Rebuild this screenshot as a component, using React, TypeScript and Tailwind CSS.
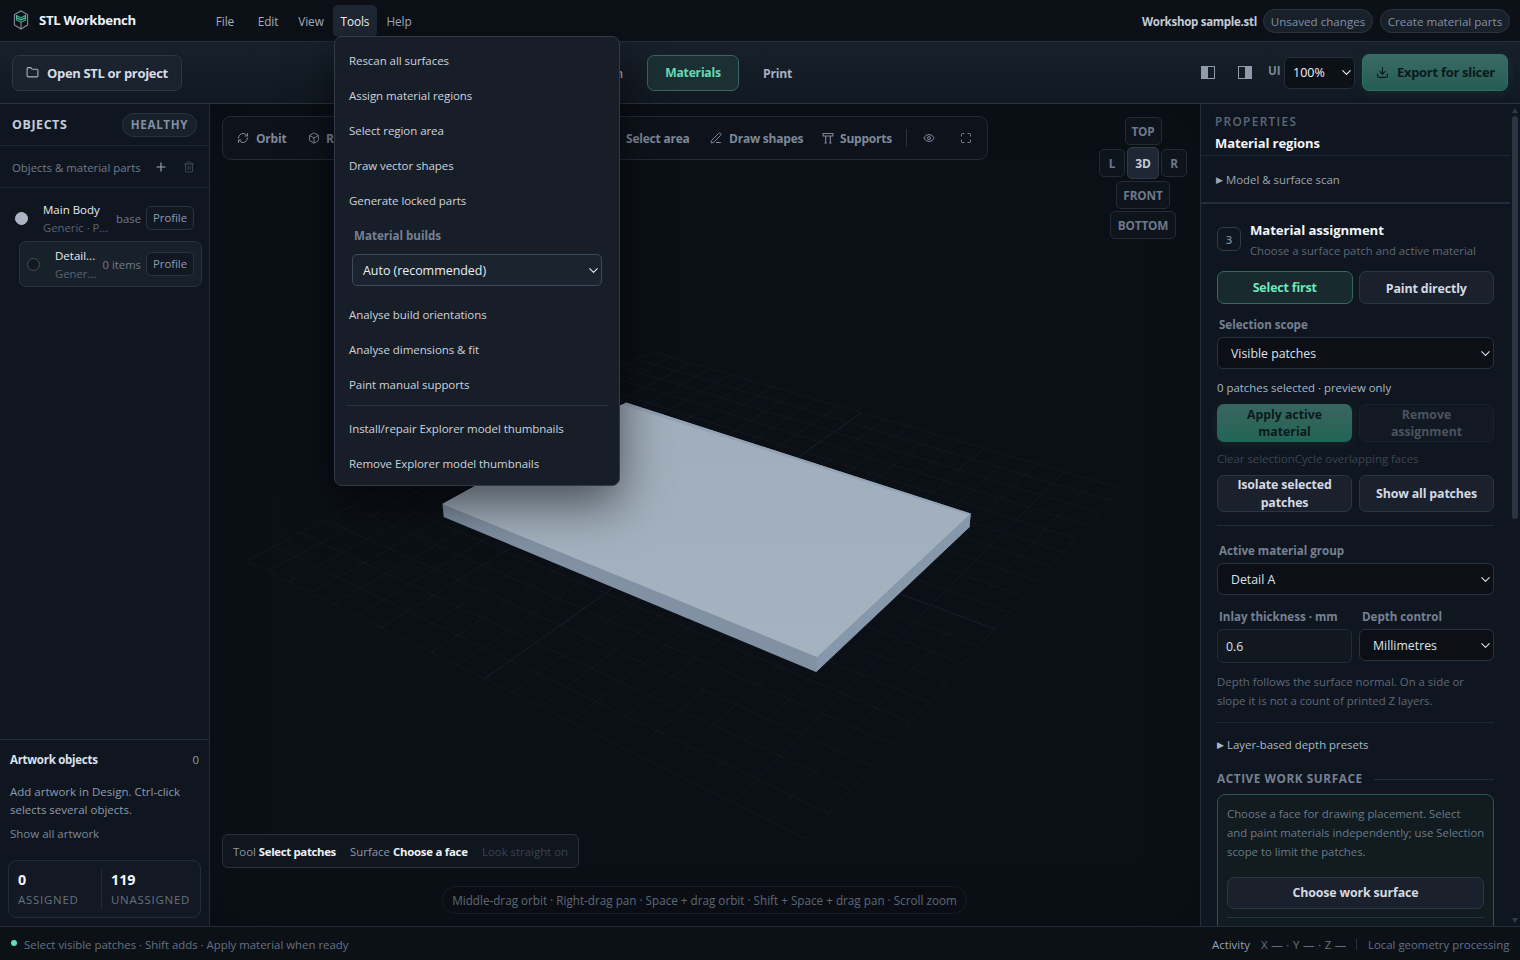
import React from 'react';
import { Box, ChevronDown, Download, Eye, Folder, Maximize, PenLine, Plus, RefreshCw, Trash2 } from 'lucide-react';
import clsx from 'clsx';

const menus = [
  { label: 'File', width: 'w-[42px]' },
  { label: 'Edit', width: 'w-[42px]' },
  { label: 'View', width: 'w-[42px]' },
  { label: 'Tools', width: 'w-[44px]' },
  { label: 'Help', width: 'w-[42px]' },
];

const Logo = () => (
  <svg width="16" height="20" viewBox="0 0 16 20" fill="none" strokeWidth="1.1">
    <path d="M8 1 L14.6 4.6 V15 L8 19 L1.4 15 V4.6 Z M8 12 V19" stroke="#7f8b9b" />
    <path d="M3.4 5.4 L8 7.8 L12.6 5.4 V9.8 L8 12.2 L3.4 9.8 Z" stroke="#45a586" />
    <path d="M3.6 5.6 V7.8 L8 9.8 L12.4 7.8 V5.6" stroke="#56c7a2" />
  </svg>
);

const SupportsIcon = () => (
  <svg width="12" height="12" viewBox="0 0 12 12" fill="none" stroke="currentColor" strokeWidth="1.1">
    <path d="M.5 1.5 H11.5 M.5 4 H11.5 M1 1.5 V4 M11 1.5 V4 M3.7 4 V11 M8.3 4 V11 M2.4 11 H4.8 M7.2 11 H9.6" />
  </svg>
);

const PanelIcon = ({ side }: { side: 'left' | 'right' }) => (
  <svg width="14" height="13" viewBox="0 0 14 13">
    <rect x="0.5" y="0.5" width="13" height="12" fill="none" stroke="#8f9bab" />
    <rect x={side === 'left' ? 1 : 7} y="0.5" width="6" height="12" fill="#8f9bab" />
  </svg>
);

const Header = () => (
  <header className="flex h-[42px] shrink-0 items-center border-b border-[#232c38] bg-[#0c1118]">
    <div className="flex w-[204px] items-center pl-[13px]">
      <Logo />
      <span className="ml-[10px] pt-px text-[13.2px] font-bold tracking-[-0.33px] text-[#eef2f7]">STL Workbench</span>
    </div>
    <nav className="flex gap-px">
      {menus.map((m) => (
        <button
          key={m.label}
          className={clsx(
            'h-8 rounded-[5px] pt-0.5 text-center text-[11.8px] tracking-[-0.1px]',
            m.width,
            m.label === 'Tools' ? 'bg-[#1e2733] text-[#f3f6fa]' : 'text-[#a4aebc]',
          )}
        >
          {m.label}
        </button>
      ))}
    </nav>
    <div className="ml-auto flex items-center pr-[10px]">
      <span className="mr-[7px] w-[114px] whitespace-nowrap pt-0.5 text-right text-[11.5px] font-bold tracking-[-0.28px] text-[#c3cbd6]">Workshop sample.stl</span>
      <span className="mr-[7px] h-6 w-[110px] whitespace-nowrap rounded-full border border-[#2a3441] bg-[#18202a] pt-[3px] text-center text-[11.6px] text-[#8290a5]">Unsaved changes</span>
      <span className="h-6 w-[130px] whitespace-nowrap rounded-full border border-[#2a3441] bg-[#18202a] pt-[3px] text-center text-[11.6px] text-[#8290a5]">Create material parts</span>
    </div>
  </header>
);

const Toolbar = () => (
  <div className="flex h-[62px] shrink-0 items-center border-b border-[#2a3340] bg-gradient-to-b from-[#18202a] to-[#111821]">
    <button className="ml-3 flex h-9 w-[170px] items-center rounded-[7px] border border-[#2c3745] bg-[#1a222d] pl-[13px] text-[13px] font-bold tracking-[-0.33px] text-[#d5dce6]">
      <Folder size={13} strokeWidth={2} className="mr-2 text-[#a9b3c1]" />
      <span className="whitespace-nowrap pt-0.5">Open STL or project</span>
    </button>
    <div className="ml-[394px] flex w-[71px] justify-end pr-6">
      <span className="pt-0.5 text-[12px] font-semibold text-[#a4aebc]">Design</span>
    </div>
    <button className="h-9 w-[92px] rounded-[7px] border border-[#35665f] bg-[#1c2f33] pt-0.5 text-[12.2px] font-bold tracking-[-0.25px] text-[#62dcb5]">Materials</button>
    <span className="ml-6 pt-[3px] text-[12.2px] font-bold tracking-[-0.2px] text-[#a4b0c0]">Print</span>
    <div className="ml-auto flex items-center pr-3">
      <PanelIcon side="left" />
      <span className="w-[23px]" />
      <PanelIcon side="right" />
      <span className="mb-[3px] ml-4 w-4 text-[11.5px] font-bold text-[#7c8797]">UI</span>
      <span className="flex h-8 w-[71px] items-center rounded-md border border-[#242e3a] bg-[#0c1118] pl-2 text-[12.5px] font-medium text-[#eef2f7]">
        <span className="pt-0.5">100%</span>
        <ChevronDown size={15} strokeWidth={1.7} className="ml-auto" />
      </span>
      <button className="ml-[7px] flex h-[37px] w-[146px] items-center rounded-[7px] border border-[#2f7064] bg-gradient-to-b from-[#3a6b66] to-[#245c52] pl-[13px] text-[13px] font-bold tracking-[-0.3px] text-[#0c1a1c] shadow-[0_2px_12px_rgba(60,160,140,0.12)]">
        <Download size={13} className="mr-2" />
        <span className="whitespace-nowrap pt-px">Export for slicer</span>
      </button>
    </div>
  </div>
);

const ObjectRow = ({ name, sub, note, nested }: { name: string; sub: string; note: string; nested?: boolean }) => (
  <div
    className={clsx(
      'flex h-[46px] items-center rounded-[7px] border pr-[7px]',
      nested ? 'ml-[19px] mr-[7px] border-[#28323f] bg-[#18202a] pl-[7px]' : 'ml-[7px] mr-[7px] border-transparent pl-[7px]',
    )}
  >
    <span
      className={clsx('size-[13px] shrink-0 rounded-full border', nested ? 'border-[#454d58] bg-[#15191f]' : 'border-[#b1bbc9] bg-[#aab4c3]')}
    />
    <div className={clsx('shrink-0 pt-px leading-[18px]', nested ? 'ml-[15px] w-[42px]' : 'ml-[15px] w-[68px]')}>
      <div className="whitespace-nowrap text-[11.5px] text-[#e6ebf2]">{name}</div>
      <div className="whitespace-nowrap text-[11.3px] text-[#596475]">{sub}</div>
    </div>
    <span className="ml-auto whitespace-nowrap pt-0.5 text-[11.3px] text-[#6f7b8d]">{note}</span>
    <span className="ml-[5px] h-6 w-12 shrink-0 rounded-[5px] border border-[#2a3441] bg-[#121821] pt-[3px] text-center text-[11.3px] text-[#8c9bb3]">Profile</span>
  </div>
);

const ObjectsPanel = () => (
  <aside className="flex w-[210px] shrink-0 flex-col border-r border-[#232c38] bg-[#10161f]">
    <div className="flex h-[42px] shrink-0 items-center justify-between border-b border-[#1f2833] pl-3 pr-3">
      <span className="pt-0.5 text-[12.4px] font-bold tracking-[0.6px] text-[#c3cede]">OBJECTS</span>
      <span className="flex h-6 w-[75px] items-center justify-center rounded-full border border-[#2a3441] bg-[#18202a] pt-px text-[11.6px] font-bold tracking-[0.65px] text-[#8290a5]">HEALTHY</span>
    </div>
    <div className="flex h-[42px] shrink-0 items-center border-b border-[#1f2833] pl-3">
      <span className="w-[142px] whitespace-nowrap pt-0.5 text-[11.4px] text-[#6f7b8d]">Objects &amp; material parts</span>
      <Plus size={14} className="text-[#9aa5b4]" />
      <Trash2 size={12} className="ml-[15px] text-[#3b4553]" />
    </div>
    <div className="flex flex-col pt-[7px]">
      <ObjectRow name="Main Body" sub="Generic · P..." note="base" />
      <ObjectRow name="Detail..." sub="Gener..." note="0 items" nested />
    </div>
    <div className="mt-auto flex h-[187px] shrink-0 flex-col border-t border-[#232c38] px-[10px] pt-[11px] text-[11.5px] text-[#8e9bae]">
      <div className="flex justify-between leading-[18px]">
        <span className="font-bold tracking-[-0.28px] text-[#dbe2eb]">Artwork objects</span>
        <span>0</span>
      </div>
      <p className="mt-[14px] whitespace-nowrap leading-[18px]">Add artwork in Design. Ctrl-click<br />selects several objects.</p>
      <span className="mt-[6px] leading-[18px] text-[#7b8798]">Show all artwork</span>
      <div className="-mx-[2px] mt-[17px] flex h-[58px] items-center rounded-lg border border-[#232d39] bg-[#121922]">
        <div className="ml-[9px] w-[83px] pt-px">
          <div className="text-[14.3px] font-bold leading-[20px] text-[#f1f5f9]">0</div>
          <div className="text-[11.5px] leading-[19px] tracking-[0.72px] text-[#66727f]">ASSIGNED</div>
        </div>
        <span className="h-[38px] w-px bg-[#232d39]" />
        <div className="ml-[9px] pt-px">
          <div className="text-[14.3px] font-bold leading-[20px] text-[#f1f5f9]">119</div>
          <div className="text-[11.5px] leading-[19px] tracking-[0.72px] text-[#66727f]">UNASSIGNED</div>
        </div>
      </div>
    </div>
  </aside>
);

// Perspective map of the unit square onto the floor quad
const floor = { l: [246.5, 560.5], t: [651.7, 351.5], r: [1120.7, 488.3], b: [806, 839.3] };

const project = (u: number, v: number) => {
  const [x0, y0] = floor.l;
  const [x1, y1] = floor.t;
  const [x2, y2] = floor.r;
  const [x3, y3] = floor.b;
  const dx1 = x1 - x2, dx2 = x3 - x2, sx = x0 - x1 + x2 - x3;
  const dy1 = y1 - y2, dy2 = y3 - y2, sy = y0 - y1 + y2 - y3;
  const det = dx1 * dy2 - dx2 * dy1;
  const g = (sx * dy2 - dx2 * sy) / det;
  const h = (dx1 * sy - sx * dy1) / det;
  const w = g * u + h * v + 1;
  const x = ((x1 - x0 + g * x1) * u + (x3 - x0 + h * x3) * v + x0) / w;
  const y = ((y1 - y0 + g * y1) * u + (y3 - y0 + h * y3) * v + y0) / w;
  return `${x.toFixed(2)} ${y.toFixed(2)}`;
};

const Scene = () => {
  const steps = Array.from({ length: 21 }, (_, i) => i);
  return (
    <svg className="block" width="990" height="822" viewBox="210 104 990 822" fill="none">
      <defs>
        <linearGradient id="top" x1="0" y1="400" x2="0" y2="660" gradientUnits="userSpaceOnUse">
          <stop offset="0" stopColor="#a0aebb" />
          <stop offset="1" stopColor="#a5b3c1" />
        </linearGradient>
      </defs>
      {steps.map((i) => (
        <path
          key={i}
          d={`M${project(i / 20, 0)} L${project(i / 20, 1)} M${project(0, i / 20)} L${project(1, i / 20)}`}
          stroke={i === 10 ? '#1a2027' : '#12181e'}
        />
      ))}
      <path d="M442.5 504 L626 402.5 L970.7 513.5 L969.5 527 L816 672 L443.7 517 Z" fill="#8190a2" />
      <path d="M817 657 L970.7 513.5 L969.5 527 L816 672 Z" fill="#8798aa" />
      <path d="M442.5 504 L626 402.5 L970.7 513.5 L817 657 Z" fill="#93a2b5" />
      <path d="M442.5 504 L622 404.5 L969 515 L817 657 Z" fill="url(#top)" />
    </svg>
  );
};

const tool = 'flex items-center whitespace-nowrap text-[12px] font-bold tracking-[-0.22px] text-[#7d899a]';
const viewKey = 'flex h-7 items-center justify-center rounded-[5px] border border-[#222b36] bg-[#0e141c] pt-px text-[11.8px] font-bold tracking-[-0.15px] text-[#6d788a]';

const Viewport = () => (
  <main className="relative w-[990px] shrink-0 bg-[#0b1017] shadow-[inset_0_0_60px_rgba(0,0,0,0.2)]">
    <Scene />
    <div className="absolute left-3 top-3 flex h-[44px] w-[766px] items-center rounded-[9px] border border-[#222b36] bg-[#0e131b] pl-[14px]">
      <span className={clsx(tool, 'w-[71px]')}><RefreshCw size={12} className="mr-[7px]" /><span className="pt-0.5">Orbit</span></span>
      <span className={clsx(tool, 'w-[318px]')}><Box size={12} className="mr-[6px]" /><span className="pt-0.5">R</span></span>
      <span className={clsx(tool, 'w-[84px] pt-0.5')}>Select area</span>
      <span className={clsx(tool, 'w-[112px]')}><PenLine size={12} className="mr-[7px]" /><span className="pt-0.5">Draw shapes</span></span>
      <span className={clsx(tool, 'w-[84px]')}><SupportsIcon /><span className="ml-[6px] pt-0.5">Supports</span></span>
      <span className="h-[18px] w-px bg-[#2a3441]" />
      <Eye size={12} className="ml-4 text-[#7d899a]" />
      <Maximize size={12} className="ml-[25px] text-[#7d899a]" />
    </div>
    <div className="absolute right-[13px] top-[13px] flex w-[88px] flex-col items-center">
      <span className={clsx(viewKey, 'w-[37px]')}>TOP</span>
      <div className="mt-[2px] flex items-center gap-[2px]">
        <span className={clsx(viewKey, 'w-[26px]')}>L</span>
        <span className="flex h-8 w-8 items-center justify-center rounded-[5px] border border-[#303b49] bg-[#1e2733] pt-px text-[12px] font-bold text-[#c3ccd8]">3D</span>
        <span className={clsx(viewKey, 'w-[26px]')}>R</span>
      </div>
      <span className={clsx(viewKey, 'mt-[2px] w-[54px]')}>FRONT</span>
      <span className={clsx(viewKey, 'mt-[2px] w-[66px]')}>BOTTOM</span>
    </div>
    <div className="absolute left-3 top-[730px] flex h-[34px] w-[357px] items-center whitespace-nowrap rounded-md border border-[#28323f] bg-[#0f161e] pl-[10px] pt-px text-[11.4px] text-[#8d99a9]">
      <span className="w-[117px]">Tool <b className="font-bold tracking-[-0.33px] text-[#eef2f7]">Select patches</b></span>
      <span className="w-[132px]">Surface <b className="font-bold tracking-[-0.24px] text-[#eef2f7]">Choose a face</b></span>
      <span className="text-[#39434f]">Look straight on</span>
    </div>
    <div className="absolute left-[232px] top-[782px] flex h-7 w-[525px] items-center justify-center whitespace-nowrap rounded-full border border-[#171d25] bg-[#0a0e14] pt-px text-[11.7px] text-[#5d6877]">
      Middle-drag orbit · Right-drag pan · Space + drag orbit · Shift + Space + drag pan · Scroll zoom
    </div>
  </main>
);

const Select = ({ value, className }: { value: string; className?: string }) => (
  <div className={clsx('flex h-8 items-center rounded-md border border-[#28323f] bg-[#0c1016] pl-[13px] text-[12.3px] font-medium text-[#dde3eb]', className)}>
    <span className="pt-0.5">{value}</span>
    <ChevronDown size={15} strokeWidth={1.7} className="ml-auto" />
  </div>
);

const plainButton = 'flex items-center justify-center rounded-[7px] border border-[#2b3644] bg-[#1a212c] text-center text-[12.4px] font-bold leading-[18px] tracking-[-0.15px] text-[#d3dae4]';
const fieldLabel = 'whitespace-nowrap pl-[2px] text-[11.6px] font-bold leading-[18px] tracking-[-0.02px] text-[#758193]';

const PropertiesPanel = () => (
  <aside className="flex h-[822px] w-[320px] shrink-0 border-l border-[#232c38] bg-[#10161f]">
    <div className="h-[822px] w-[309px] overflow-hidden">
      <div className="h-[52px] border-b border-[#1f2833] pl-[14px] pt-[7px]">
        <div className="text-[11.8px] font-semibold leading-[20px] tracking-[1.35px] text-[#5d6878]">PROPERTIES</div>
        <div className="pt-px text-[13px] font-bold leading-[22px] tracking-[-0.1px] text-[#f1f5f9]">Material regions</div>
      </div>
      <div className="flex h-12 items-center border-b-2 border-[#232d39] pl-[15px] pt-0.5 text-[11.4px] text-[#9aa6b6]">
        <span className="mr-[3px] text-[9px]">▶</span>Model &amp; surface scan
      </div>
      <div className="pl-4 pr-4 pt-4">
        <div className="flex h-[41px]">
          <span className="mr-[9px] mt-[7px] flex size-6 items-center justify-center rounded-[6px] border border-[#2f3a48] pt-0.5 text-[11.3px] font-semibold text-[#7d899a]">3</span>
          <div className="whitespace-nowrap">
            <div className="text-[13.2px] font-bold leading-[21px] tracking-[-0.1px] text-[#f1f5f9]">Material assignment</div>
            <div className="text-[11.3px] leading-[20px] text-[#5d6878]">Choose a surface patch and active material</div>
          </div>
        </div>
        <div className="mt-[10px] grid grid-cols-2 gap-[6px]">
          <button className="h-[33px] rounded-[7px] border border-[#2f6a5d] bg-[#182a2e] pt-0.5 text-[12.4px] font-bold tracking-[-0.15px] text-[#6ee7bf]">Select first</button>
          <button className={clsx(plainButton, 'h-[33px] pt-0.5')}>Paint directly</button>
        </div>
        <div className={clsx(fieldLabel, 'mt-3')}>Selection scope</div>
        <Select value="Visible patches" className="mt-[3px]" />
        <div className="mt-[10px] text-[11.4px] leading-[18px] text-[#a5b9c9]">0 patches selected · preview only</div>
        <div className="mt-[7px] grid grid-cols-2 gap-[7px]">
          <button className="h-[38px] rounded-[7px] bg-gradient-to-b from-[#3a645f] to-[#1f6556] px-4 text-[12.3px] font-bold leading-[17px] text-[#0c1a1c] shadow-[0_2px_10px_rgba(60,160,140,0.12)]">Apply active material</button>
          <button className="h-[38px] rounded-[7px] border border-[#1a222c] bg-[#131922] px-4 text-[12.3px] font-bold leading-[17px] text-[#4b535f]">Remove assignment</button>
        </div>
        <div className="mt-[8px] text-[11.4px] leading-[18px] text-[#3b4552]">Clear selectionCycle overlapping faces</div>
        <div className="mt-[7px] grid grid-cols-2 gap-[7px]">
          <button className={clsx(plainButton, 'h-[37px] px-4')}>Isolate selected patches</button>
          <button className={clsx(plainButton, 'h-[37px] pt-px')}>Show all patches</button>
        </div>
        <div className="mt-[13px] h-px bg-[#232d39]" />
        <div className={clsx(fieldLabel, 'mt-4')}>Active material group</div>
        <Select value="Detail A" className="mt-[3px]" />
        <div className="mt-[13px] flex">
          <div className="w-[143px]">
            <div className={fieldLabel}>Inlay thickness · mm</div>
            <div className="mt-[3px] flex h-[34px] w-[135px] items-center rounded-md border border-[#222c38] bg-[#111820] pl-2 pt-0.5 text-[12.3px] font-medium text-[#dde3eb]">0.6</div>
          </div>
          <div className="flex-1">
            <div className={fieldLabel}>Depth control</div>
            <Select value="Millimetres" className="-ml-px mt-[3px]" />
          </div>
        </div>
        <p className="mt-[9px] whitespace-nowrap text-[11.4px] leading-[19px] text-[#5d6878]">Depth follows the surface normal. On a side or<br />slope it is not a count of printed Z layers.</p>
        <div className="mt-[12px] h-px bg-[#1e2732]" />
        <div className="mt-[13px] flex h-[18px] items-center text-[11.4px] text-[#a5b9c9]">
          <span className="mr-[3px] text-[9px]">▶</span>Layer-based depth presets
        </div>
        <div className="mt-4 flex h-[18px] items-center text-[11.8px] font-bold tracking-[0.55px] text-[#758193]">
          <span className="w-[157px] whitespace-nowrap">ACTIVE WORK SURFACE</span>
          <span className="h-px flex-1 bg-[#232d39]" />
        </div>
        <div className="mt-[6px] h-[180px] rounded-lg border border-[#24574f] bg-[#111b20] px-[9px] pt-[9px]">
          <p className="whitespace-nowrap text-[11.35px] leading-[19px] text-[#6b7a88]">
            Choose a face for drawing placement. Select<br />and paint materials independently; use Selection<br />scope to limit the patches.
          </p>
          <button className={clsx(plainButton, 'mt-4 h-8 w-full')}>Choose work surface</button>
          <div className="mt-2 h-px bg-[#1d3a3a]" />
        </div>
      </div>
    </div>
    <div className="flex h-[822px] w-[10px] flex-col items-center">
      <svg className="mb-[3px] mt-1 shrink-0" width="6" height="5" viewBox="0 0 6 5"><path d="M3 0 L6 5 H0 Z" fill="#2f3947" /></svg>
      <span className="h-[403px] w-[6px] rounded-full bg-[#2b3543]" />
      <svg className="mb-[3px] mt-auto shrink-0" width="6" height="5" viewBox="0 0 6 5"><path d="M3 5 L6 0 H0 Z" fill="#2f3947" /></svg>
    </div>
  </aside>
);

const MenuItem = ({ children }: { children: React.ReactNode }) => (
  <button className="flex h-[35px] items-center whitespace-nowrap pl-[6px] text-left text-[11.5px] tracking-[-0.06px] text-[#ccd3dd]">{children}</button>
);

const ToolsMenu = () => (
  <div className="absolute left-[334px] top-[36px] flex h-[450px] w-[286px] flex-col rounded-lg border border-[#303a49] bg-[#181e28] px-2 pt-[6px] shadow-[0_18px_48px_rgba(0,0,0,0.55)]">
    <MenuItem>Rescan all surfaces</MenuItem>
    <MenuItem>Assign material regions</MenuItem>
    <MenuItem>Select region area</MenuItem>
    <MenuItem>Draw vector shapes</MenuItem>
    <MenuItem>Generate locked parts</MenuItem>
    <div className="mt-[9px] pl-[11px] text-[11.6px] font-bold leading-[18px] tracking-[-0.02px] text-[#758193]">Material builds</div>
    <div className="ml-[9px] mr-[9px] mt-[9px] flex h-8 items-center rounded-[5px] border border-[#3b4a5c] bg-[#1b242e] pl-[10px] text-[12.5px] font-medium tracking-[-0.05px] text-[#e9edf3]">
      <span className="pt-0.5">Auto (recommended)</span>
      <ChevronDown size={15} strokeWidth={1.7} className="ml-auto" />
    </div>
    <div className="mt-[11px] flex flex-col">
      <MenuItem>Analyse build orientations</MenuItem>
      <MenuItem>Analyse dimensions &amp; fit</MenuItem>
      <MenuItem>Paint manual supports</MenuItem>
    </div>
    <div className="mx-[3px] mb-[5px] mt-[3px] h-px shrink-0 bg-[#2a3542]" />
    <MenuItem>Install/repair Explorer model thumbnails</MenuItem>
    <MenuItem>Remove Explorer model thumbnails</MenuItem>
  </div>
);

const StatusBar = () => (
  <footer className="flex h-[34px] shrink-0 items-center whitespace-nowrap border-t border-[#232c38] bg-[#0c1118] pl-[11px] pr-[11px] pt-[2px] text-[11.4px] text-[#66727f]">
    <span className="mb-[3px] mr-[7px] size-[6px] rounded-full bg-[#5fe0b8]" />
    <span>Select visible patches · Shift adds · Apply material when ready</span>
    <span className="ml-auto w-[49px] text-[#94a0b0]">Activity</span>
    <span className="w-[95px] tracking-[0.35px]">X — · Y — · Z —</span>
    <span className="mr-[11px] h-[11px] w-px bg-[#28323f]" />
    <span className="w-[141px] text-right text-[#607088]">Local geometry processing</span>
  </footer>
);

const App = () => {
  return (
    <div className="relative flex h-[960px] w-[1520px] flex-col overflow-hidden bg-[#0a0f16] font-['Open_Sans',sans-serif]">
      <Header />
      <Toolbar />
      <div className="flex h-[822px] shrink-0">
        <ObjectsPanel />
        <Viewport />
        <PropertiesPanel />
      </div>
      <StatusBar />
      <ToolsMenu />
    </div>
  );
};

export default App;
